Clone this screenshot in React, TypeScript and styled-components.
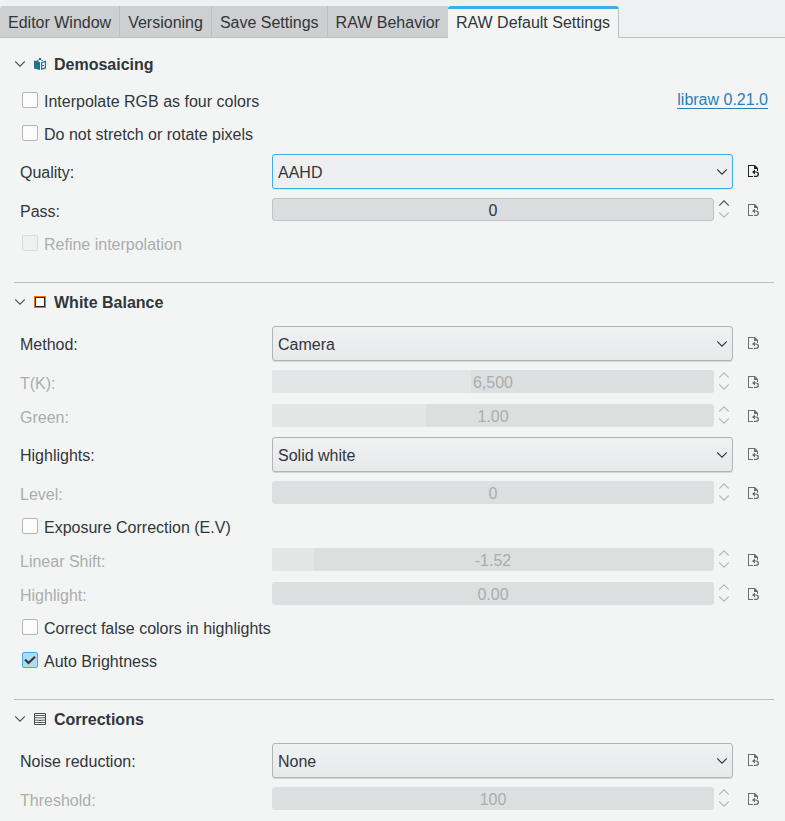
import React, { useId, useState } from "react";
import styled, { createGlobalStyle } from "styled-components";

const c = {
  window: "#eff0f1",
  panel: "#f3f5f4",
  text: "#31363b",
  muted: "#abadae",
  border: "#bcbebf",
  accent: "#3daee9",
  link: "#2980b9",
};

const GlobalStyle = createGlobalStyle`
  *, *::before, *::after { box-sizing: border-box; }
  body {
    margin: 0;
    background: ${c.panel};
    color: ${c.text};
    font: 16px/20px "Liberation Sans", Arial, sans-serif;
    overflow: hidden;
  }
  button, input, select { font: inherit; color: inherit; }
`;

const Page = styled.main`
  display: flex;
  flex-direction: column;
`;

const TabBar = styled.div`
  display: flex;
  padding-top: 6px;
  background: ${c.window};

  &::after {
    content: "";
    flex: 1;
    border-bottom: 1px solid ${c.border};
  }
`;

const Tab = styled.button<{ $active: boolean }>`
  height: 32px;
  padding: ${(p) => (p.$active ? "0 8px 2px" : "3px 8px 0")};
  border: solid ${c.border};
  border-width: ${(p) => (p.$active ? "0 1px 0 0" : "0 1px 1px 0")};
  border-top: ${(p) => (p.$active ? `3px solid ${c.accent}` : "0")};
  border-radius: ${(p) => (p.$active ? "3px 3px 0 0" : "0")};
  background: ${(p) => (p.$active ? c.panel : "#cdcfd0")};
  white-space: nowrap;

  &:first-child { border-top-left-radius: 3px; }
  &:has(+ [aria-selected="true"]) { border-right: 0; }
`;

const Panel = styled.div`
  padding: 7px 11px 9px 14px;
`;

const SectionBox = styled.section`
  padding: 6px 0 26px;

  & + & { border-top: 1px solid ${c.border}; }
`;

const SectionHeading = styled.h2`
  margin: 0 0 10px;
  font-size: 16px;
`;

const SectionToggle = styled.button`
  display: flex;
  align-items: center;
  height: 26px;
  gap: 8px;
  padding: 0 1px;
  border: 0;
  background: none;
  font-weight: bold;

  & > svg:first-child { margin-right: 1px; color: #4b4f53; }
  & > span { padding-top: 2px; }
`;

const Form = styled.div`
  display: flex;
  flex-direction: column;
  gap: 7px;
  padding-left: 6px;
`;

const Row = styled.div<{ $tall?: boolean }>`
  display: grid;
  grid-template-columns: 252px minmax(0, 1fr) 41px;
  align-items: center;
  height: ${(p) => (p.$tall ? "36px" : "27px")};
  padding-top: ${(p) => (p.$tall ? "1px" : "0")};
`;

const FieldLabel = styled.label<{ $disabled?: boolean }>`
  color: ${(p) => (p.$disabled ? c.muted : c.text)};
  padding-top: 3px;
`;

const NumberLabel = styled(FieldLabel)`
  padding-top: 4px;
`;

const CheckRow = styled.div`
  display: flex;
  align-items: center;
  justify-content: space-between;
  height: 26px;
  padding: 0 6px 0 2px;
`;

const CheckLabel = styled.label<{ $disabled?: boolean }>`
  display: grid;
  grid-template-columns: 16px auto;
  column-gap: 6px;
  align-items: center;
  color: ${(p) => (p.$disabled ? c.muted : c.text)};

  & > svg {
    grid-area: 1 / 1;
    pointer-events: none;
    z-index: 1;
  }
  & > span { padding-top: 4px; }
`;

const Check = styled.input`
  appearance: none;
  grid-area: 1 / 1;
  width: 16px;
  height: 16px;
  margin: 0;
  border: 1px solid #b4b6b7;
  border-radius: 2px;
  background: #fcfcfc;

  &:checked { border-color: ${c.accent}; background: #b3dbf0; }
  &:disabled { border-color: #d9dbdb; background: #eff0f0; }
`;

const LibLink = styled.a`
  height: 19px;
  margin-bottom: 1px;
  border-bottom: 1px solid ${c.link};
  color: ${c.link};
  text-decoration: none;
`;

const SelectBox = styled.div`
  display: grid;
  grid-template-columns: minmax(0, 1fr) 16px;
  align-items: center;

  & > svg {
    grid-area: 1 / 2;
    pointer-events: none;
  }
`;

const Select = styled.select<{ $focused?: boolean }>`
  appearance: none;
  grid-area: 1 / 1 / 2 / 3;
  width: 100%;
  height: 35px;
  padding: 2px 22px 0 5px;
  border: 1px solid ${(p) => (p.$focused ? c.accent : "#b2b4b6")};
  border-radius: 3px;
  outline: 0;
  background: ${(p) => (p.$focused ? "#eeeff1" : "linear-gradient(#f0f1f2, #e8e9eb)")};
  box-shadow: 0 1px 0 ${(p) => (p.$focused ? "#dfe3e4" : "#d5d7d7")};
`;

const NumberBox = styled.div`
  display: grid;
  grid-template-columns: minmax(0, 1fr) 10px;
  column-gap: 5px;
  align-items: center;
  padding-right: 4px;
`;

const Bar = styled.div`
  display: grid;
  height: 23px;
`;

const Range = styled.input`
  appearance: none;
  grid-area: 1 / 1;
  width: 100%;
  height: 23px;
  margin: 0;
  border: 1px solid #c1c3c4;
  border-radius: 3px;
  background: #dbdddf;

  &:disabled { border: 0; background: #dbdfdf; }
  &::-webkit-slider-thumb { appearance: none; width: 1px; height: 23px; }
`;

const Fill = styled.span`
  grid-area: 1 / 1;
  border-radius: 3px 0 0 3px;
  background: #e3e5e6;
  pointer-events: none;
  z-index: 1;
`;

const Value = styled.output<{ $disabled?: boolean }>`
  grid-area: 1 / 1;
  place-self: center;
  padding-top: 3px;
  color: ${(p) => (p.$disabled ? c.muted : c.text)};
  pointer-events: none;
  z-index: 2;
`;

const Spin = styled.div`
  display: flex;
  flex-direction: column;
  gap: 6px;
  padding-bottom: 1px;
`;

const SpinButton = styled.button`
  display: flex;
  padding: 0;
  border: 0;
  background: none;
  color: #4b4f53;

  &:disabled { color: #b4b6b7; }
`;

const ResetButton = styled.button<{ $tall?: boolean }>`
  display: grid;
  place-items: center;
  height: 100%;
  padding: ${(p) => (p.$tall ? "0 0 1px" : "1px 0 0")};
  border: 0;
  background: none;
  color: #232629;

  &:disabled { color: #6c6e70; }
`;

function Chevron({ up = false }: { up?: boolean }) {
  return (
    <svg width="10" height="6" viewBox="0 0 10 6" fill="none" stroke="currentColor" strokeWidth="1.1" aria-hidden="true">
      <path d={up ? "M.2 5.500 5 .8l4.800 4.700" : "M.2.5 5 5.200 9.800.5"} />
    </svg>
  );
}

function ResetIcon() {
  return (
    <svg width="11" height="12" viewBox="0 0 11 12" fill="currentColor" aria-hidden="true">
      <path d="M0 0h7l3 3v3H9V4H6V1H1v10h4v1H0z" />
      <path d="M4 7l3-2.500V6.500h1.200a2.700 2.700 0 0 1 0 5.500H6v-1.200h2a1.600 1.600 0 0 0 0-3.200H7v2z" />
    </svg>
  );
}

function DemosaicIcon() {
  return (
    <svg width="12" height="12" viewBox="0 0 12 12" fill="#1f7391" aria-hidden="true">
      <path d="M0 2.500 2 3l1-.6 3 1.800V12L0 10.500z" />
      <path d="M7 4.200 12 2.500v8L7 12zM8.200 5v5.200l2.600-.8V4.200z" fillRule="evenodd" />
      <path d="M5 0h2v2H5zM4.500 1.500 5 2.200 3.500 3.200 3 2.500zM7.500 1.500 9 2.500l-.5.7L7 2.200zM8 7h2v1H8z" />
    </svg>
  );
}

function WhiteBalanceIcon() {
  return (
    <svg width="12" height="12" viewBox="0 0 12 12" aria-hidden="true">
      <path fill="#f67400" d="M0 0h12v12H0z" />
      <path fill="#232629" d="M1 1h10v10H1z" />
      <path fill="#fcfcfc" d="M2 2h8v8H2z" />
    </svg>
  );
}

function CorrectionsIcon() {
  return (
    <svg width="12" height="12" viewBox="0 0 12 12" fill="none" stroke="#4b4f53" aria-hidden="true">
      <path d="M.5.5h11v11H.5z" />
      <path d="M1 2.500h10M1 4.500q5 1 10 0M1 7q5 1 10 0M1 9.500h10" strokeWidth=".9" />
    </svg>
  );
}

function CheckMark() {
  return (
    <svg width="16" height="16" viewBox="0 0 16 16" fill="none" stroke="#31363b" strokeWidth="2" aria-hidden="true">
      <path d="M3 7.500 6.500 11 13 4.800" />
    </svg>
  );
}

function Section({ title, icon, children }: { title: string; icon: React.ReactNode; children: React.ReactNode }) {
  const [open, setOpen] = useState(true);
  return (
    <SectionBox>
      <SectionHeading>
        <SectionToggle type="button" aria-expanded={open} onClick={() => setOpen(!open)}>
          <Chevron />
          {icon}
          <span>{title}</span>
        </SectionToggle>
      </SectionHeading>
      {open && <Form>{children}</Form>}
    </SectionBox>
  );
}

function CheckField(p: { label: string; checked?: boolean; disabled?: boolean; children?: React.ReactNode }) {
  const [checked, setChecked] = useState(!!p.checked);
  return (
    <CheckRow>
      <CheckLabel $disabled={p.disabled}>
        <Check type="checkbox" checked={checked} disabled={p.disabled} onChange={(e) => setChecked(e.target.checked)} />
        {checked && <CheckMark />}
        <span>{p.label}</span>
      </CheckLabel>
      {p.children}
    </CheckRow>
  );
}

function SelectField(p: { label: string; options: string[]; focused?: boolean; changed?: boolean }) {
  const id = useId();
  return (
    <Row $tall>
      <FieldLabel htmlFor={id}>{p.label}</FieldLabel>
      <SelectBox>
        <Select id={id} $focused={p.focused}>
          {p.options.map((o) => (
            <option key={o}>{o}</option>
          ))}
        </Select>
        <Chevron />
      </SelectBox>
      <ResetButton $tall type="button" aria-label={`Reset ${p.label}`} disabled={!p.changed}>
        <ResetIcon />
      </ResetButton>
    </Row>
  );
}

function NumberField(p: {
  label: string;
  value: number;
  min: number;
  max: number;
  step?: number;
  digits?: number;
  disabled?: boolean;
}) {
  const id = useId();
  const { min, max, step = 1, digits = 0, disabled } = p;
  const [value, setValue] = useState(p.value);
  const text = value.toLocaleString("en-US", { minimumFractionDigits: digits, maximumFractionDigits: digits });
  const move = (d: number) => setValue(Math.min(max, Math.max(min, value + d)));
  return (
    <Row>
      <NumberLabel htmlFor={id} $disabled={disabled}>{p.label}</NumberLabel>
      <NumberBox>
        <Bar>
          <Range
            id={id}
            type="range"
            min={min}
            max={max}
            step={step}
            value={value}
            disabled={disabled}
            onChange={(e) => setValue(Number(e.target.value))}
          />
          <Fill style={{ width: `${((value - min) / (max - min)) * 100}%` }} />
          <Value htmlFor={id} $disabled={disabled}>{text}</Value>
        </Bar>
        <Spin>
          <SpinButton type="button" aria-label={`Increase ${p.label}`} disabled={disabled} onClick={() => move(step)}>
            <Chevron up />
          </SpinButton>
          <SpinButton
            type="button"
            aria-label={`Decrease ${p.label}`}
            disabled={disabled || value <= min}
            onClick={() => move(-step)}
          >
            <Chevron />
          </SpinButton>
        </Spin>
      </NumberBox>
      <ResetButton type="button" aria-label={`Reset ${p.label}`} disabled>
        <ResetIcon />
      </ResetButton>
    </Row>
  );
}

const TABS = ["Editor Window", "Versioning", "Save Settings", "RAW Behavior", "RAW Default Settings"];

export default function App() {
  const [tab, setTab] = useState(4);
  return (
    <Page>
      <GlobalStyle />
      <TabBar role="tablist">
        {TABS.map((name, i) => (
          <Tab key={name} type="button" role="tab" aria-selected={tab === i} $active={tab === i} onClick={() => setTab(i)}>
            {name}
          </Tab>
        ))}
      </TabBar>
      <Panel role="tabpanel">
        <Section title="Demosaicing" icon={<DemosaicIcon />}>
          <CheckField label="Interpolate RGB as four colors">
            <LibLink href="#libraw">libraw 0.21.0</LibLink>
          </CheckField>
          <CheckField label="Do not stretch or rotate pixels" />
          <SelectField label="Quality:" options={["AAHD", "Bilinear", "VNG", "PPG", "AHD", "DCB", "DHT"]} focused changed />
          <NumberField label="Pass:" value={0} min={0} max={10} />
          <CheckField label="Refine interpolation" disabled />
        </Section>
        <Section title="White Balance" icon={<WhiteBalanceIcon />}>
          <SelectField label="Method:" options={["Camera", "Default D65", "Automatic", "Manual"]} />
          <NumberField label="T(K):" value={6500} min={2000} max={12000} step={10} disabled />
          <NumberField label="Green:" value={1} min={0.2} max={2.5} step={0.01} digits={2} disabled />
          <SelectField label="Highlights:" options={["Solid white", "Unclip", "Blend", "Rebuild"]} />
          <NumberField label="Level:" value={0} min={0} max={9} disabled />
          <CheckField label="Exposure Correction (E.V)" />
          <NumberField label="Linear Shift:" value={-1.52} min={-2} max={3} step={0.01} digits={2} disabled />
          <NumberField label="Highlight:" value={0} min={0} max={1} step={0.01} digits={2} disabled />
          <CheckField label="Correct false colors in highlights" />
          <CheckField label="Auto Brightness" checked />
        </Section>
        <Section title="Corrections" icon={<CorrectionsIcon />}>
          <SelectField label="Noise reduction:" options={["None", "Wavelets", "FBDD"]} />
          <NumberField label="Threshold:" value={100} min={100} max={1000} disabled />
        </Section>
      </Panel>
    </Page>
  );
}
